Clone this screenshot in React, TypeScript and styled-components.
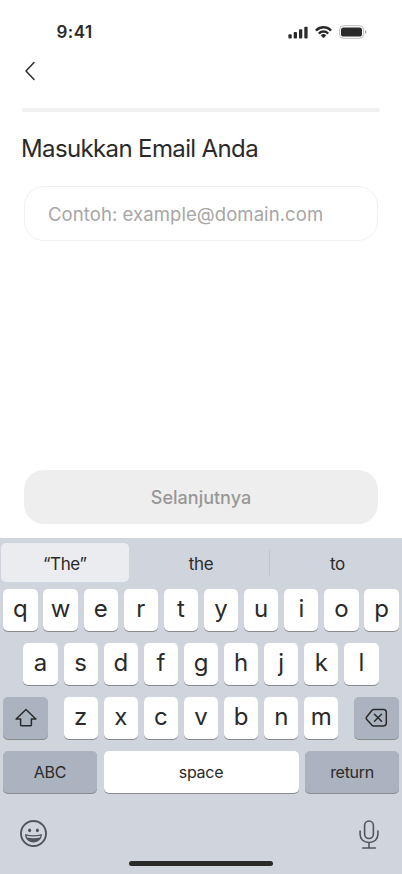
import React from "react";
import styled, { createGlobalStyle } from "styled-components";

const GlobalStyle = createGlobalStyle`
  * { box-sizing: border-box; }
  body { margin: 0; background: #fff; }
  button, input { font: inherit; color: inherit; border: 0; margin: 0; padding: 0; }
`;

const Screen = styled.div`
  display: flex;
  flex-direction: column;
  width: 402px;
  height: 874px;
  overflow: hidden;
  background: #fff;
  color: #2a2a2a;
  font-family: Inter, "Liberation Sans", sans-serif;
`;

const StatusBar = styled.header`
  display: flex;
  justify-content: space-between;
  align-items: center;
  height: 54px;
  padding: 10px 35px 0 56.5px;
`;

const Clock = styled.span`
  font-size: 17px;
  font-weight: 600;
  line-height: 22px;
  letter-spacing: 0.5px;
`;

const StatusIcons = styled.div`
  display: flex;
  align-items: center;
  gap: 7px;
  svg { display: block; }
`;

const NavBar = styled.nav`
  height: 54px;
  padding: 7px 0 0 24px;
`;

const BackButton = styled.button`
  display: block;
  background: none;
  svg { display: block; }
`;

const ProgressTrack = styled.div`
  height: 4px;
  margin: 0 22px;
  border-radius: 2px;
  background: #f0f0f0;
`;

const Form = styled.main`
  flex: 1;
  display: flex;
  flex-direction: column;
  padding: 22px 24px 14px;
`;

const Title = styled.h1`
  margin: 0 0 22px -3px;
  font-size: 24px;
  font-weight: 400;
  line-height: 30px;
  letter-spacing: -0.63px;
  white-space: nowrap;
`;

const EmailInput = styled.input`
  width: 354px;
  height: 55px;
  padding: 0 23px;
  border: 1.5px solid #f0f0f0;
  border-radius: 20px;
  outline: none;
  background: #fff;
  font-size: 18.5px;
  letter-spacing: 0.08px;
  &::placeholder { color: #a6a6a6; opacity: 1; }
`;

const SubmitButton = styled.button`
  height: 54px;
  margin-top: auto;
  border-radius: 20px;
  background: #eee;
  color: #979797;
  font-size: 18px;
  font-weight: 500;
`;

const Keyboard = styled.section`
  display: flex;
  flex-direction: column;
  height: 336px;
  background: #d0d4dd;
`;

const Suggestions = styled.div`
  display: flex;
  height: 51px;
  padding: 5px 0 7px 1px;
  font-size: 17px;
  letter-spacing: -0.4px;
`;

const Suggestion = styled.div<{ $active?: boolean; $width: number; $inset?: number }>`
  display: flex;
  flex-shrink: 0;
  align-items: center;
  justify-content: center;
  width: ${(p) => p.$width}px;
  padding: 2px 0 0 ${(p) => p.$inset ?? 0}px;
  border-radius: 5px;
  background: ${(p) => (p.$active ? "#ebecf0" : "transparent")};
`;

const SuggestionDivider = styled.div`
  flex-shrink: 0;
  width: 1px;
  height: 25px;
  margin-top: 7px;
  background: #c0c4cd;
`;

const KeyRows = styled.div`
  display: flex;
  flex-direction: column;
  gap: 12px;
  padding: 0 3px;
`;

const KeyRow = styled.div<{ $spread?: boolean }>`
  display: flex;
  justify-content: ${(p) => (p.$spread ? "space-between" : "center")};
  gap: 5.95px;
`;

const LetterGroup = styled.div`
  display: flex;
  gap: 5.95px;
`;

const Key = styled.button<{ $width?: number; $tone?: "light" | "dark"; $label?: boolean }>`
  display: flex;
  align-items: center;
  justify-content: center;
  width: ${(p) => p.$width ?? 34.2}px;
  height: 42px;
  padding-bottom: ${(p) => (p.$label ? 0 : 4)}px;
  border-radius: 5px;
  background: ${(p) => (p.$tone === "dark" ? "#abb2c0" : "#fff")};
  box-shadow: 0 1px 0 #898a8d;
  font-size: ${(p) => (p.$label ? 16 : 24)}px;
  letter-spacing: ${(p) => (p.$label ? -0.3 : 0)}px;
`;

const KeyboardFooter = styled.div`
  display: flex;
  justify-content: space-between;
  padding: 27px 23px 0 20px;
  svg { display: block; }
`;

const HomeIndicator = styled.div`
  width: 144px;
  height: 5px;
  margin: auto auto 8px;
  border-radius: 3px;
  background: #2a2a2a;
`;

const SignalIcon = () => (
  <svg width="20" height="13" viewBox="0 0 20 13" fill="#2a2a2a">
    <rect x="0.4" y="8.3" width="3.3" height="4.1" rx="1" />
    <rect x="5.7" y="6" width="3.3" height="6.4" rx="1" />
    <rect x="11" y="3.3" width="3.3" height="9.1" rx="1" />
    <rect x="16.3" y="0.8" width="3.3" height="11.6" rx="1" />
  </svg>
);

const WifiIcon = () => (
  <svg width="17" height="13" viewBox="0 0 17 13" fill="#2a2a2a">
    <path d="M8.5 2.6c2.4 0 4.7.95 6.45 2.6.13.13.34.13.47 0l1.26-1.28a.35.35 0 0 0 0-.5c-4.57-4.4-11.8-4.4-16.37 0a.35.35 0 0 0 0 .5L1.57 5.2c.13.13.34.13.47 0A9.35 9.35 0 0 1 8.5 2.6Z" />
    <path d="M8.5 6.8c1.3 0 2.57.5 3.54 1.37.13.12.34.12.47 0l1.26-1.28a.35.35 0 0 0 0-.5 7.65 7.65 0 0 0-10.54 0 .35.35 0 0 0 0 .5l1.26 1.28c.13.12.34.12.47 0A5.28 5.28 0 0 1 8.5 6.8Z" />
    <path d="M11.02 9.6a.34.34 0 0 0-.01-.5 3.85 3.85 0 0 0-5.02 0 .34.34 0 0 0-.01.5l2.28 2.31c.13.14.35.14.48 0l2.28-2.3Z" />
  </svg>
);

const BatteryIcon = () => (
  <svg width="28" height="14" viewBox="0 0 28 14">
    <rect x="0.5" y="0.7" width="24" height="12.6" rx="4" fill="#fff" stroke="#bdbdbd" />
    <rect x="2" y="2.4" width="21" height="9.2" rx="2.6" fill="#2a2a2a" />
    <path d="M26 5v4.2c.85-.35 1.4-1.15 1.4-2.1S26.850 5.350 26 5Z" fill="#aaa" />
  </svg>
);

const BackIcon = () => (
  <svg width="12" height="20" viewBox="0 0 12 20" fill="none" stroke="#2a2a2a" strokeWidth="1.5" strokeLinecap="round" strokeLinejoin="round">
    <path d="M10 1.500 2 10l8 8.500" />
  </svg>
);

const ShiftIcon = () => (
  <svg width="22" height="20" viewBox="0 0 22 20" fill="none" stroke="#2a2a2a" strokeWidth="1.5" strokeLinejoin="round">
    <path d="M11 1.500 1.100 11h4.500v5.700c0 .7.400 1.100 1.100 1.100h8.600c.7 0 1.100-.4 1.100-1.100V11h4.500Z" />
  </svg>
);

const DeleteIcon = () => (
  <svg width="23" height="20" viewBox="0 0 23 20" fill="none" stroke="#2a2a2a" strokeWidth="1.500" strokeLinecap="round" strokeLinejoin="round">
    <path d="M8.800 1.600h9.700c1.700 0 2.800 1.100 2.800 2.800v10.700c0 1.700-1.100 2.800-2.800 2.800H8.800c-.8 0-1.500-.3-2-.8l-5-5.700c-.9-1-.9-1.700 0-2.700l5-6.200c.5-.6 1.200-.9 2-.9Z" />
    <path d="m9.500 6.200 7 7m0-7-7 7" />
  </svg>
);

const EmojiIcon = () => (
  <svg width="27" height="27" viewBox="0 0 27 27" fill="none">
    <circle cx="13.500" cy="13.500" r="12.500" stroke="#50545e" strokeWidth="1.900" />
    <ellipse cx="9.600" cy="10.300" rx="1.500" ry="1.900" fill="#50545e" />
    <ellipse cx="17.400" cy="10.300" rx="1.500" ry="1.900" fill="#50545e" />
    <path d="M5 14.100c5.500 1.600 11.500 1.600 17 0-.2 5.100-3.400 8.400-8.500 8.400S5.200 19.200 5 14.100Z" fill="#50545e" />
    <path d="M6.500 15.700c4.600 1.100 9.400 1.100 14 0-.1.700-.4 1.300-.8 1.900-4 .9-8.400.9-12.400 0-.4-.6-.7-1.200-.8-1.900Z" fill="#d0d4dd" />
  </svg>
);

const MicIcon = () => (
  <svg width="20" height="30" viewBox="0 0 20 30" fill="none" stroke="#50545e" strokeWidth="1.600" strokeLinecap="round">
    <rect x="5.600" y="1" width="8.800" height="17.500" rx="4.400" />
    <path d="M1.100 11v3.200c0 5 3.600 8.300 8.900 8.300s8.900-3.300 8.900-8.300V11M10 22.500V28M3.700 28h12.600" />
  </svg>
);

const letters = (row: string) => row.split("").map((c) => <Key key={c}>{c}</Key>);

export default function App() {
  return (
    <Screen>
      <GlobalStyle />
      <StatusBar>
        <Clock>9:41</Clock>
        <StatusIcons>
          <SignalIcon />
          <WifiIcon />
          <BatteryIcon />
        </StatusIcons>
      </StatusBar>
      <NavBar>
        <BackButton aria-label="Kembali"><BackIcon /></BackButton>
      </NavBar>
      <ProgressTrack />
      <Form>
        <Title>Masukkan Email Anda</Title>
        <EmailInput type="email" placeholder="Contoh: example@domain.com" />
        <SubmitButton>Selanjutnya</SubmitButton>
      </Form>
      <Keyboard>
        <Suggestions>
          <Suggestion $active $width={127.5}>“The”</Suggestion>
          <Suggestion $width={140} $inset={5}>the</Suggestion>
          <SuggestionDivider />
          <Suggestion $width={136}>to</Suggestion>
        </Suggestions>
        <KeyRows>
          <KeyRow>{letters("qwertyuiop")}</KeyRow>
          <KeyRow>{letters("asdfghjkl")}</KeyRow>
          <KeyRow $spread>
            <Key $width={45} $tone="dark" $label aria-label="shift"><ShiftIcon /></Key>
            <LetterGroup>{letters("zxcvbnm")}</LetterGroup>
            <Key $width={45} $tone="dark" $label aria-label="delete"><DeleteIcon /></Key>
          </KeyRow>
          <KeyRow $spread>
            <Key $width={94} $tone="dark" $label>ABC</Key>
            <Key $width={195} $label>space</Key>
            <Key $width={94} $tone="dark" $label>return</Key>
          </KeyRow>
        </KeyRows>
        <KeyboardFooter>
          <EmojiIcon />
          <MicIcon />
        </KeyboardFooter>
        <HomeIndicator />
      </Keyboard>
    </Screen>
  );
}
